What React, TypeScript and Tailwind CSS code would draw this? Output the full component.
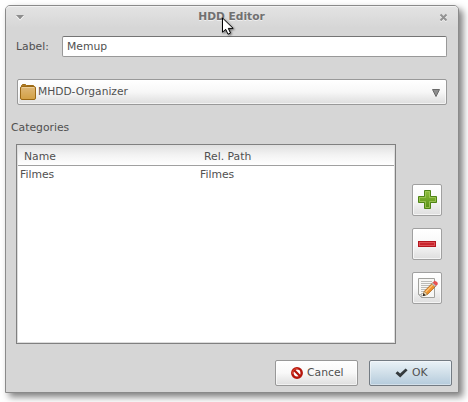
import type { ReactNode } from "react";

function ToolButton({ label, children }: { label: string; children: ReactNode }) {
  return (
    <button
      aria-label={label}
      className="flex h-8 w-[30px] items-center justify-center rounded-[2px] border border-[#a0a0a0] bg-linear-to-b from-white via-[#f8f8f8] to-[#dedede] shadow-[inset_0_0_0_1px_#ffffffaa]"
    >
      {children}
    </button>
  );
}

function PlusIcon() {
  return (
    <svg width="20" height="20" viewBox="0 0 20 20">
      <defs>
        <linearGradient id="plus" x1="0" y1="0" x2="0" y2="1">
          <stop offset="0" stopColor="#8fbe3c" />
          <stop offset="1" stopColor="#568e14" />
        </linearGradient>
      </defs>
      <path d="M7.5 .5h6v6h6v6h-6v6h-6v-6h-6v-6h6z" fill="url(#plus)" stroke="#4f8416" />
      <path d="M8.5 1.5h4v6h6v4h-6v6h-4v-6h-6v-4h6z" fill="none" stroke="#a6cb60" strokeOpacity=".75" />
    </svg>
  );
}

function MinusIcon() {
  return (
    <svg width="20" height="20" viewBox="0 0 20 20">
      <rect x="1.5" y="7.5" width="17" height="5" fill="#c4262e" stroke="#b3161e" />
      <rect x="2.5" y="8.5" width="15" height="3" fill="#c9252d" stroke="#dc4f54" />
    </svg>
  );
}

function EditIcon() {
  return (
    <svg width="22" height="22" viewBox="0 0 22 22">
      <path d="M2.5 1.5h16v19h-13l-3-3z" fill="#f7f7f5" stroke="#a2a29e" />
      <path d="M2.5 17.5h3v3z" fill="#d8d8d4" stroke="#a2a29e" strokeWidth=".7" />
      <path d="M5 4.5h11M5 6.5h11M5 8.5h10M5 10.5h9M5 12.5h7M5 14.5h4M5 16.5h3" stroke="#bcbcb9" />
      <path d="M7.2 18.6l1.2-4.3 8.2-8.3 3.2 3.1-8.3 8.3z" fill="#f0922c" stroke="#a85f12" strokeWidth=".8" />
      <path d="M9.6 15l8.1-8.1" stroke="#ffc67a" strokeWidth="1.2" />
      <path d="M7.2 18.6l1.2-4.3 3.1 3.1z" fill="#eed9b0" stroke="#8d7347" strokeWidth=".5" />
      <path d="M6.6 19.2l.9-3 2.1 2.1z" fill="#222" />
      <path d="M15.8 6.7l1.2-1.2 3.2 3.1-1.2 1.2z" fill="#c9c9c9" stroke="#8f8f8f" strokeWidth=".5" />
      <path d="M17 5.5l.9-.9c1.8-1.3 4.6 1.4 3.2 3.1l-.9.9z" fill="#ee4f50" stroke="#d4393c" strokeWidth=".5" />
    </svg>
  );
}

function FolderIcon() {
  return (
    <svg width="18" height="18" viewBox="0 0 18 18" className="shrink-0">
      <defs>
        <linearGradient id="folder" x1="0" y1="0" x2="0" y2="1">
          <stop offset="0" stopColor="#dfb878" />
          <stop offset="1" stopColor="#d2a044" />
        </linearGradient>
      </defs>
      <path d="M2.5 5V2.5l1-1h3l1 1h7V5" fill="#b07c26" stroke="#a06d16" />
      <rect x="1.5" y="3.5" width="15" height="13" rx="1.5" fill="url(#folder)" stroke="#9c6914" />
      <path d="M2.8 4.5h12.4" stroke="#ecce98" />
    </svg>
  );
}

function CancelIcon() {
  return (
    <svg width="12" height="12" viewBox="0 0 12 12">
      <circle cx="6" cy="6" r="4.7" fill="#fff" stroke="#b5150b" strokeWidth="2.5" />
      <path d="M2.8 2.8l6.4 6.4" stroke="#b5150b" strokeWidth="2.3" />
      <path d="M1.5 7a4.6 4.6 0 0 1 5.2-5.5" fill="none" stroke="#df422c" strokeWidth="1" />
    </svg>
  );
}

function CheckIcon() {
  return (
    <svg width="13" height="10" viewBox="0 0 13 10">
      <path d="M.5 5.2l2.1-2 2.5 2.2L10.6.6l2 1.6L5.2 9.4z" fill="#343a3d" />
    </svg>
  );
}

function Pointer() {
  return (
    <svg
      className="absolute left-[216px] top-[11px] drop-shadow-[1px_1px_1px_#00000088]"
      width="13"
      height="19"
      viewBox="0 0 13 19"
    >
      <path d="M.5 1v14.2l3.2-2.9 2.3 4.9 2.5-1.2-2.2-4.6h4.9z" fill="#fff" stroke="#000" />
    </svg>
  );
}

export default function App() {
  return (
    <div className="h-[402px] w-[468px] overflow-hidden bg-white pl-[5px] pt-[5px] font-['DejaVu_Sans',sans-serif] text-[10.8px] leading-[14px] text-[#505050]">
      <div className="relative flex h-[388px] w-[454px] flex-col rounded-t-[5px] border border-[#8a8a8a] bg-[#d6d6d6] shadow-[4px_4px_7px_#00000080]">
        <header className="flex h-[22px] shrink-0 items-center justify-between rounded-t-[4px] border-t border-[#f2f2f2] bg-linear-to-b from-[#e3e3e3] to-[#d6d6d6] px-2.5 text-[#707070]">
          <svg width="8" height="6" viewBox="0 0 8 6">
            <path d="M0 1h8L4 5.5z" fill="#fff" />
            <path d="M0 0h8L4 4.5z" fill="#8d8d8d" />
          </svg>
          <h1 className="pb-px text-[10.67px] font-bold [text-shadow:0_1px_0_#eeeeee]">HDD Editor</h1>
          <svg className="-mt-px" width="9" height="9" viewBox="0 0 9 9">
            <path d="M1.5 2.5l6 6M7.5 2.5l-6 6" stroke="#f4f4f4" strokeWidth="2" />
            <path d="M1.5 1.5l6 6M7.5 1.5l-6 6" stroke="#929292" strokeWidth="2" />
          </svg>
        </header>

        <main className="flex flex-1 flex-col pr-1.5 pt-2">
          <div className="flex items-center pl-2.5 pr-[5px]">
            <label htmlFor="label" className="w-[46px]">Label:</label>
            <input
              id="label"
              defaultValue="Memup"
              className="h-[21px] w-[385px] rounded-[2px] border border-[#999] border-t-[#747474] bg-white px-1 outline-none"
            />
          </div>

          <button className="ml-[11px] mt-[22px] flex h-[26px] w-[430px] items-center rounded-[2px] border border-[#999] bg-linear-to-b from-white via-[#f7f7f7] to-[#dddddd] pl-px pr-1.5 shadow-[inset_0_0_0_1px_#ffffff99]">
            <FolderIcon />
            <span className="ml-px text-[10.67px]">MHDD-Organizer</span>
            <svg className="ml-auto mt-px" width="8" height="8" viewBox="0 0 8 8">
              <path d="M.5.5h7L4 7.5z" fill="#8e8e8e" stroke="#686868" />
            </svg>
          </button>

          <h2 className="ml-[5px] mt-4">Categories</h2>

          <div className="mt-[9px] flex justify-between px-2.5">
            <section className="h-[200px] w-[380px] border border-[#808080] bg-white shadow-[inset_0_0_0_1px_#dcdcdc]">
              <div className="mx-px flex h-[21px] items-center border-b border-[#a0a0a0] bg-linear-to-b from-[#e0e0e0] via-[#f3f3f3] to-white pl-1.5 pt-[3px]">
                <span className="w-[180px]">Name</span>
                <span>Rel. Path</span>
              </div>
              <div className="flex pl-[3px] pt-0.5">
                <span className="w-[180px]">Filmes</span>
                <span>Filmes</span>
              </div>
            </section>
            <div className="flex flex-col gap-3 pt-10">
              <ToolButton label="Add"><PlusIcon /></ToolButton>
              <ToolButton label="Remove"><MinusIcon /></ToolButton>
              <ToolButton label="Edit"><EditIcon /></ToolButton>
            </div>
          </div>

          <footer className="mt-4 flex justify-end gap-[11px]">
            <button className="flex h-[26px] w-[83px] items-center gap-1 rounded-[2px] border border-[#989898] bg-linear-to-b from-white via-[#f8f8f8] to-[#dedede] pl-[15px] shadow-[inset_0_0_0_1px_#ffffff99]">
              <CancelIcon />
              Cancel
            </button>
            <button className="flex h-[26px] w-[83px] items-center gap-1 rounded-[2px] border border-[#737b83] bg-linear-to-b from-[#eaf2f7] via-[#d0dfe9] to-[#b5cbdc] pl-[25px] shadow-[inset_0_0_0_1px_#ffffff66]">
              <CheckIcon />
              OK
            </button>
          </footer>
        </main>
        <Pointer />
      </div>
    </div>
  );
}
